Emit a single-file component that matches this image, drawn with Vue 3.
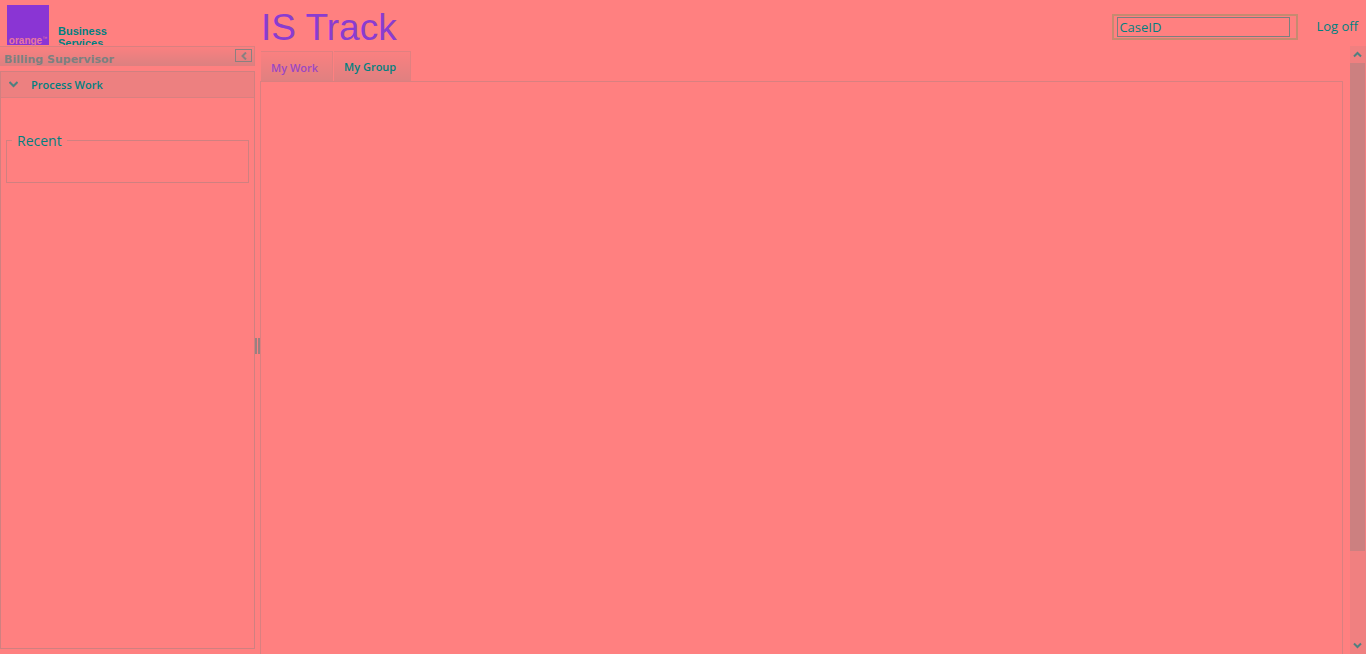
<script setup>
import { ref } from 'vue'

const caseId = ref('CaseID')
const activeTab = ref('My Work')
const tabs = ['My Work', 'My Group']
</script>

<template>
  <div class="portal">
    <header class="top">
      <div class="brand">
        <div class="logo"><span>orange</span><i>™</i></div>
        <div class="division">Business<br />Services</div>
      </div>
      <h1>IS Track</h1>
      <div class="search">
        <input v-model="caseId" type="text" aria-label="Case ID" />
      </div>
      <a class="logoff" href="#">Log off</a>
    </header>

    <div class="body">
      <aside class="sidebar">
        <div class="role">
          <h2>Billing Supervisor</h2>
          <button class="collapse" type="button" aria-label="Collapse panel">
            <svg width="6" height="8" viewBox="0 0 6 8"><path d="M5 0.5 L1.5 4 L5 7.5" /></svg>
          </button>
        </div>
        <div class="panel">
          <button class="section" type="button">
            <svg width="9" height="7" viewBox="0 0 9 7"><path d="M0.5 1 L4.5 5 L8.5 1" /></svg>
            <span>Process Work</span>
          </button>
          <fieldset class="recent">
            <legend>Recent</legend>
          </fieldset>
        </div>
      </aside>

      <div class="splitter"><span></span><span></span></div>

      <main class="main">
        <div class="tabs" role="tablist">
          <button
            v-for="tab in tabs"
            :key="tab"
            type="button"
            role="tab"
            class="tab"
            :class="{ active: tab === activeTab }"
            :aria-selected="tab === activeTab"
            @click="activeTab = tab"
          >{{ tab }}</button>
        </div>
        <section class="content"></section>
      </main>

      <div class="scrollbar">
        <button type="button" aria-label="Scroll up">
          <svg width="9" height="7" viewBox="0 0 9 7"><path d="M1 5.5 L4.5 2 L8 5.5" /></svg>
        </button>
        <div class="track"><div class="thumb"></div></div>
        <button type="button" aria-label="Scroll down">
          <svg width="9" height="7" viewBox="0 0 9 7"><path d="M1 1.5 L4.5 5 L8 1.5" /></svg>
        </button>
      </div>
    </div>
  </div>
</template>

<style>
body {
  background: #ff8080;
}
</style>

<style scoped>
.portal {
  display: flex;
  flex-direction: column;
  height: 100vh;
  overflow: hidden;
  background: #ff8080;
  color: #008080;
  font-family: "Open Sans", sans-serif;
  font-size: 14px;
}
.portal * {
  box-sizing: border-box;
}
button {
  margin: 0;
  padding: 0;
  border: 0;
  background: none;
  color: inherit;
  font: inherit;
}
svg {
  display: block;
  fill: none;
  stroke: #4f8080;
  stroke-width: 2;
}
.top {
  display: flex;
  height: 46px;
  padding-right: 8px;
}
.brand {
  display: flex;
  gap: 9px;
  width: 261px;
  padding: 5px 0 0 7px;
}
.logo {
  display: flex;
  align-items: flex-end;
  justify-content: center;
  width: 42px;
  height: 40px;
  background: #8a35d4;
  color: #e878a0;
  font: bold 10px/9px "Liberation Sans", Arial, sans-serif;
}
.logo i {
  font: normal 5px/14px "Liberation Sans", Arial, sans-serif;
}
.division {
  height: 40px;
  padding-top: 20px;
  overflow: hidden;
  font: bold 11px/12px "Liberation Sans", Arial, sans-serif;
}
h1 {
  flex: 1;
  margin: 0;
  padding-top: 6px;
  color: #8a3cd0;
  font: 37px/44px "Liberation Sans", Arial, sans-serif;
}
.search {
  align-self: flex-start;
  width: 186px;
  height: 26px;
  margin-top: 14px;
  padding: 1px 6px 1px 3px;
  border: 2px solid #c68a70;
}
.search input {
  display: block;
  width: 100%;
  height: 20px;
  margin: 0;
  padding: 0 1px;
  border: 1px solid #7a8080;
  border-radius: 0;
  outline: 0;
  background: transparent;
  color: inherit;
  font: 13px/18px "Open Sans", sans-serif;
}
.logoff {
  margin-left: 18px;
  padding-top: 16px;
  color: inherit;
  font-size: 13px;
  line-height: 20px;
  text-decoration: none;
}
.body {
  display: flex;
  flex: 1;
  min-height: 0;
}
.sidebar {
  display: flex;
  flex-direction: column;
  gap: 5px;
  width: 255px;
  padding-bottom: 5px;
}
.role {
  display: flex;
  align-items: flex-start;
  justify-content: space-between;
  height: 20px;
  padding: 2px 2px 0 4px;
  border-top: 1px solid #d98080;
  border-right: 1px solid #d98080;
  background: linear-gradient(#fa8080, #dc8080);
}
h2 {
  margin: 0;
  color: #7c8080;
  font: bold 11px/22px "DejaVu Sans", Verdana, sans-serif;
}
.collapse {
  display: flex;
  align-items: center;
  justify-content: center;
  width: 17px;
  height: 13px;
  border: 1px solid #8a8080;
}
.collapse svg {
  stroke: #8a8080;
}
.panel {
  flex: 1;
  border: 1px solid #d08080;
}
.section {
  display: flex;
  align-items: center;
  gap: 13px;
  width: 100%;
  height: 26px;
  padding-left: 8px;
  border-bottom: 1px solid #d98080;
  background: #ed8080;
  font-size: 11px;
  font-weight: 600;
}
.recent {
  min-width: 0;
  height: 53px;
  margin: 32px 5px 0;
  padding: 0 5px;
  border: 1px solid #d08080;
}
.recent legend {
  padding: 0 5px;
  line-height: 21px;
}
.splitter {
  display: flex;
  align-items: center;
  justify-content: space-between;
  width: 5px;
  padding-bottom: 8px;
}
.splitter span {
  width: 2px;
  height: 16px;
  background: #9a8080;
}
.main {
  display: flex;
  flex: 1;
  flex-direction: column;
  min-width: 0;
  padding-top: 5px;
}
.tabs {
  display: flex;
  gap: 1px;
  height: 30px;
  padding-left: 1px;
}
.tab {
  height: 30px;
  padding: 0 14px 0 10px;
  border-top: 1px solid #e08080;
  border-right: 1px solid #e08080;
  background: linear-gradient(#fa8080, #e08080);
  font-size: 11px;
  font-weight: 600;
}
.tab.active {
  padding-top: 2px;
  color: #9a48c4;
}
.content {
  flex: 1;
  border: 1px solid #d98080;
  border-bottom: 0;
}
.scrollbar {
  display: flex;
  flex-direction: column;
  width: 16px;
  margin-left: 7px;
  background: #f08080;
}
.scrollbar button {
  display: flex;
  align-items: center;
  justify-content: center;
  width: 15px;
  height: 17px;
}
.track {
  flex: 1;
}
.thumb {
  width: 15px;
  height: 85%;
  background: #cc8080;
}
</style>
